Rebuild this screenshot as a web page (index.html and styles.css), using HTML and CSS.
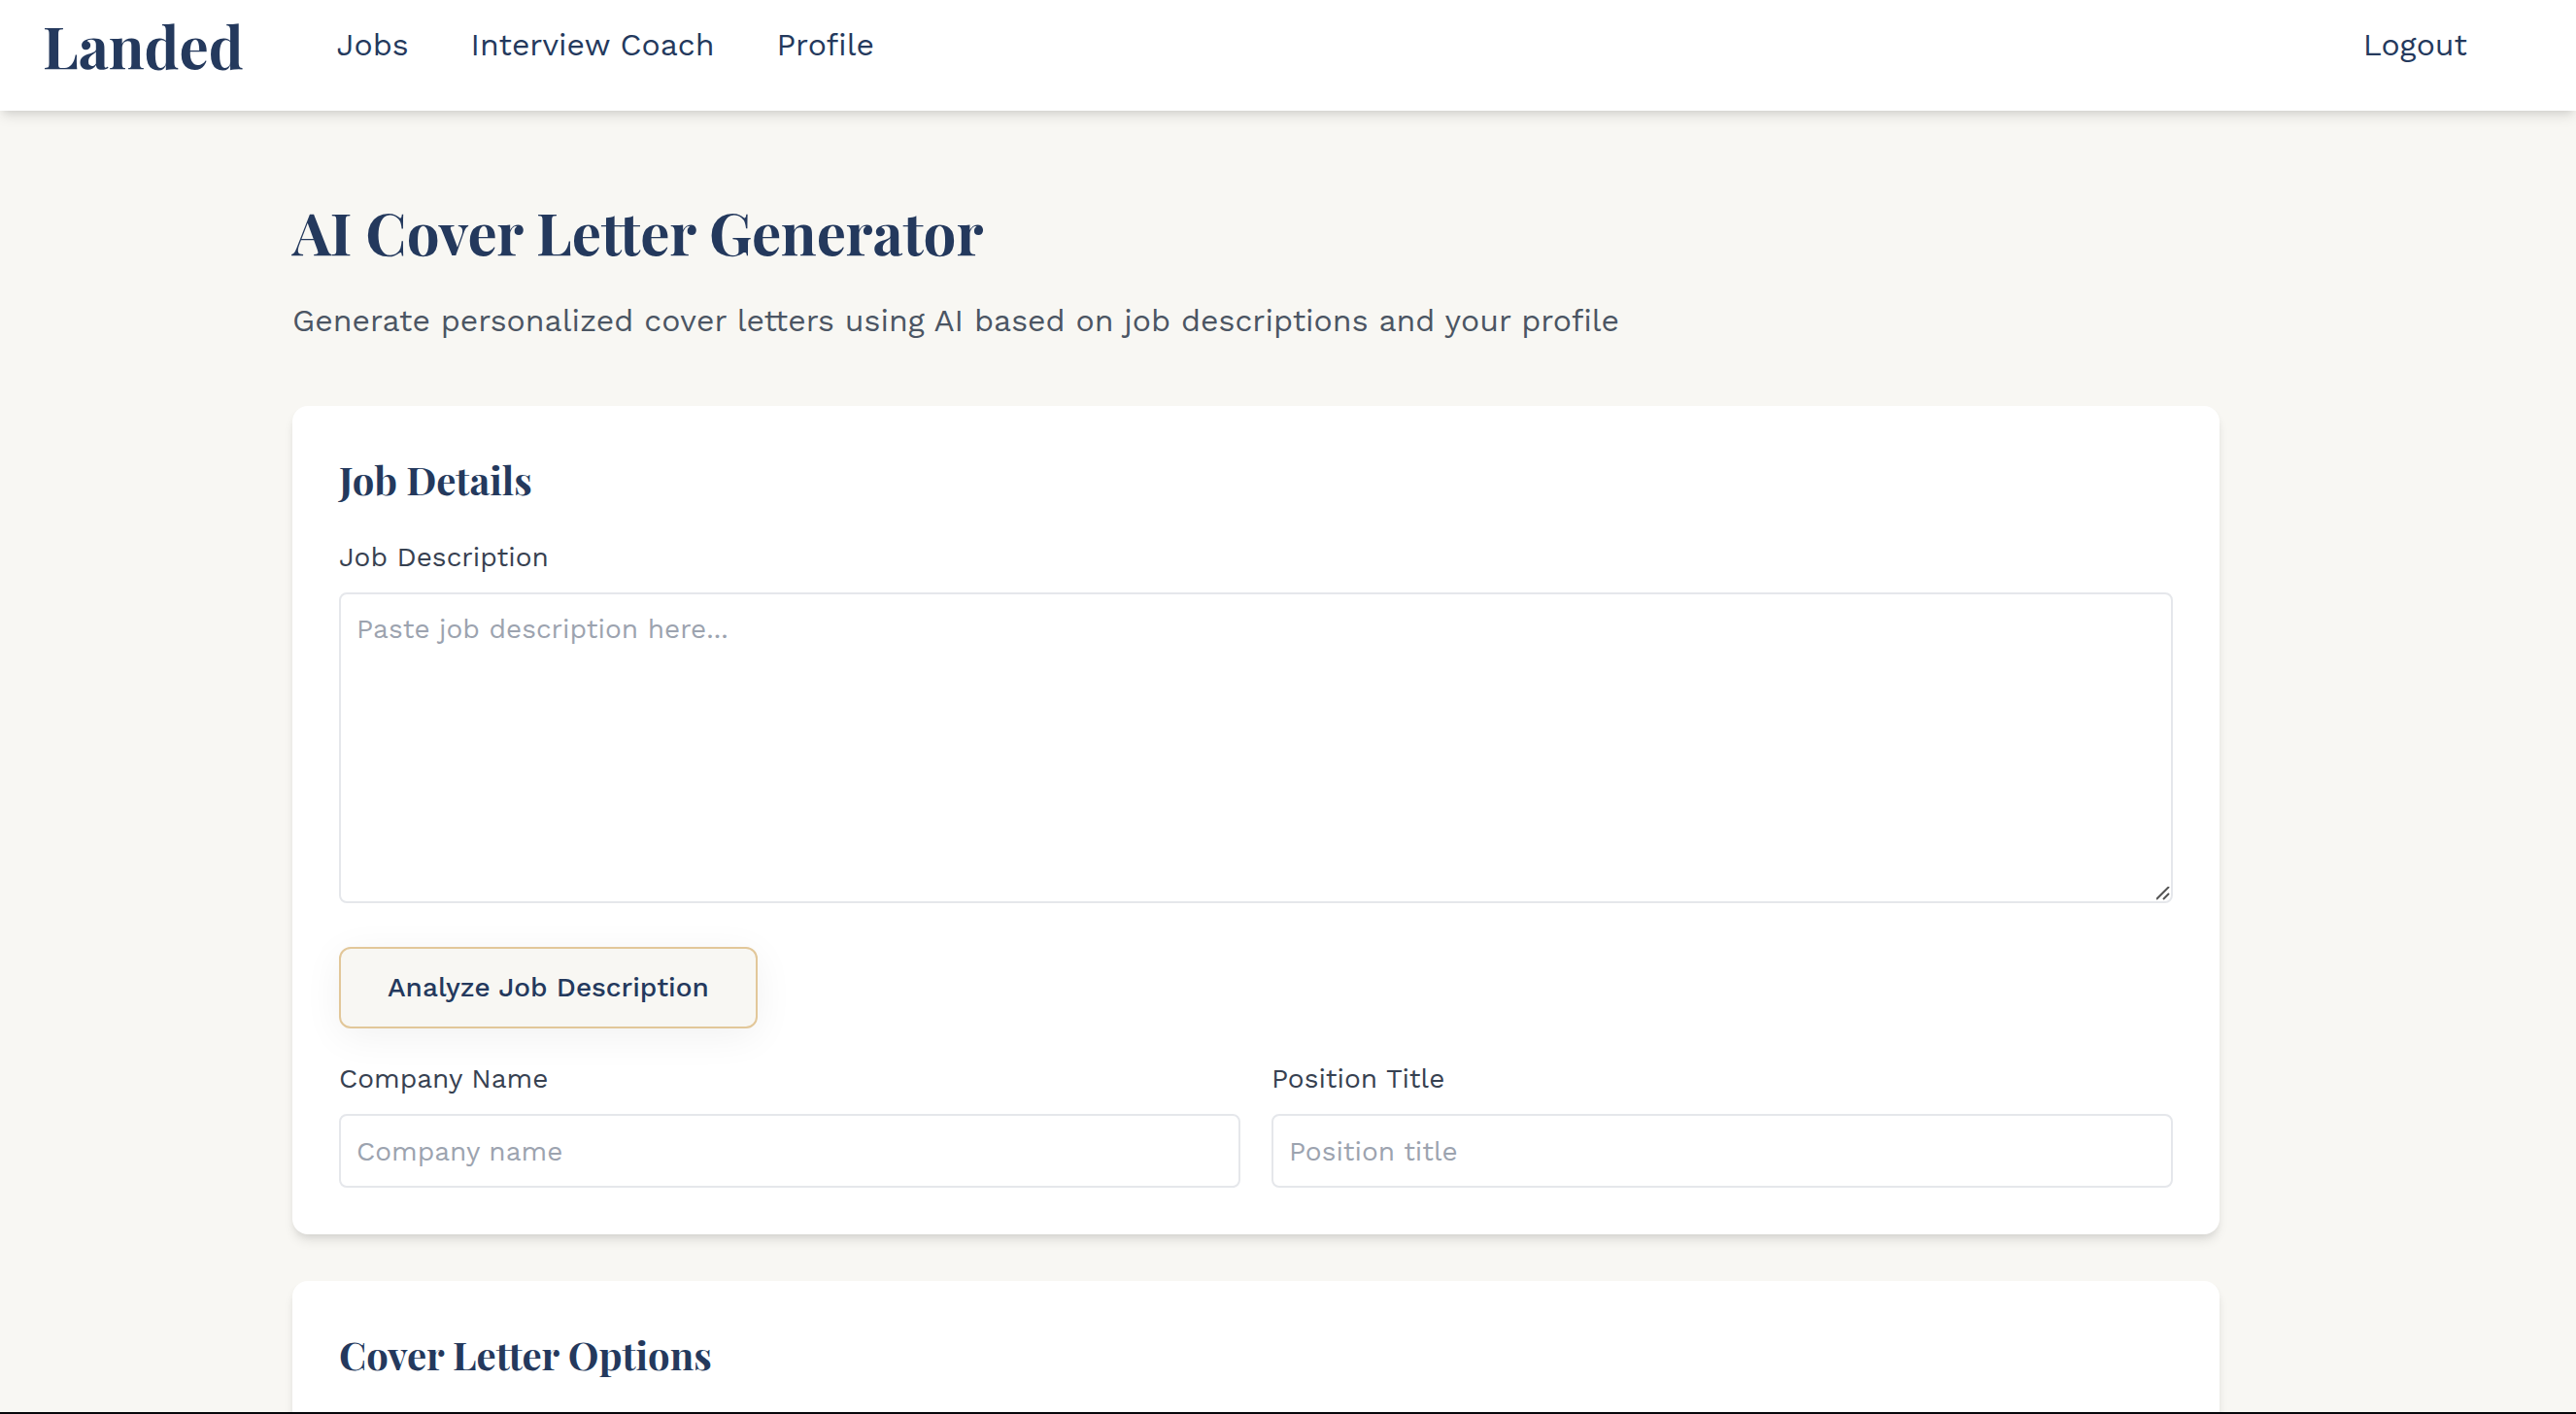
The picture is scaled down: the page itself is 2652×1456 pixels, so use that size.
FILE: index.html
```html
<!DOCTYPE html>
<html lang="en">
<head>
  <meta charset="utf-8">
  <title>AI Cover Letter Generator - Landed</title>
  <link rel="stylesheet" href="styles.css">
</head>
<body>
  <header class="site-header">
    <a class="logo" href="#">Landed</a>
    <nav class="nav">
      <a href="#">Jobs</a>
      <a href="#">Interview Coach</a>
      <a href="#">Profile</a>
    </nav>
    <a class="logout" href="#">Logout</a>
  </header>

  <main class="page">
    <h1 class="page-title">AI Cover Letter Generator</h1>
    <p class="page-lead">Generate personalized cover letters using AI based on job descriptions and your profile</p>

    <section class="card">
      <h2 class="card-title">Job Details</h2>
      <div class="field">
        <label for="description">Job Description</label>
        <textarea id="description" class="control control-area" placeholder="Paste job description here..."></textarea>
      </div>
      <button class="button" type="button">Analyze Job Description</button>
      <div class="field-row">
        <div class="field">
          <label for="company">Company Name</label>
          <input id="company" class="control" type="text" placeholder="Company name">
        </div>
        <div class="field">
          <label for="position">Position Title</label>
          <input id="position" class="control" type="text" placeholder="Position title">
        </div>
      </div>
    </section>

    <section class="card card-last">
      <h2 class="card-title">Cover Letter Options</h2>
    </section>
  </main>
</body>
</html>
```

FILE: styles.css
```css
:root {
  --navy: #24395d;
  --cream: #f8f7f3;
  --gold: #e2c799;
  --line: #e5e7eb;
  --sans: "Work Sans", Inter, sans-serif;
  --serif: "Playfair Display", "Liberation Serif", serif;
  --shadow: 0 8px 12px -2px rgba(0, 0, 0, 0.1), 0 4px 8px -4px rgba(0, 0, 0, 0.1);
}

* {
  box-sizing: border-box;
}

body {
  display: flex;
  flex-direction: column;
  height: 100vh;
  margin: 0;
  overflow: hidden;
  border-bottom: 2px solid #07070b;
  background: var(--cream);
  font-family: var(--sans);
}

.site-header {
  display: flex;
  align-items: center;
  padding: 0 112px 22px 44px;
  background: #fff;
  box-shadow: var(--shadow);
}

.site-header a {
  color: var(--navy);
  text-decoration: none;
}

.logo {
  margin-right: 96px;
  font: 700 60px/92px var(--serif);
}

.nav {
  display: flex;
  gap: 64px;
}

.nav,
.logout {
  font-size: 32px;
  line-height: 48px;
}

.logout {
  margin-left: auto;
}

.page {
  display: flex;
  flex: 1;
  flex-direction: column;
  width: calc(100% - 66px);
  min-height: 0;
  padding: 84px 301px 0;
}

.page-title,
.card-title {
  color: var(--navy);
  font-family: var(--serif);
  font-weight: 700;
}

.page-title {
  margin: 0 0 28px;
  font-size: 60px;
  line-height: 80px;
}

.page-lead {
  margin: 0 0 64px;
  color: #4b5563;
  font-size: 32px;
  line-height: 48px;
}

.card {
  flex-shrink: 0;
  margin-bottom: 48px;
  padding: 48px;
  border-radius: 16px;
  background: #fff;
  box-shadow: var(--shadow);
}

.card-last {
  flex: 1 0 auto;
  margin-bottom: 0;
  border-radius: 16px 16px 0 0;
}

.card-title {
  margin: 0 0 32px;
  font-size: 40px;
  line-height: 56px;
}

.field {
  display: flex;
  flex-direction: column;
  gap: 16px;
}

.field label {
  color: #374151;
  font-size: 28px;
  line-height: 40px;
}

.field-row {
  display: grid;
  grid-template-columns: 1fr 1fr;
  gap: 32px;
}

.control {
  width: 100%;
  height: 76px;
  margin: 0;
  padding: 16px;
  border: 2px solid var(--line);
  border-radius: 8px;
  background: #fff;
  color: #374151;
  font: 28px/40px var(--sans);
}

.control::placeholder {
  color: #9ca3af;
}

.control-area {
  height: 320px;
  resize: vertical;
}

.control-area::-webkit-scrollbar {
  width: 20px;
  height: 20px;
}

.control-area::-webkit-resizer {
  background: url("data:image/svg+xml,%3Csvg xmlns='http://www.w3.org/2000/svg' width='20' height='20'%3E%3Cpath d='M5 18 18 5M12 18l6-6' stroke='%23555' stroke-width='2'/%3E%3C/svg%3E") right bottom no-repeat;
}

.button {
  margin: 45px 0 32px;
  padding: 0 48px;
  border: 2px solid var(--gold);
  border-radius: 12px;
  background: var(--cream);
  box-shadow: 0 8px 40px rgba(0, 0, 0, 0.06);
  color: var(--navy);
  font: 500 28px/80px var(--sans);
}
```
